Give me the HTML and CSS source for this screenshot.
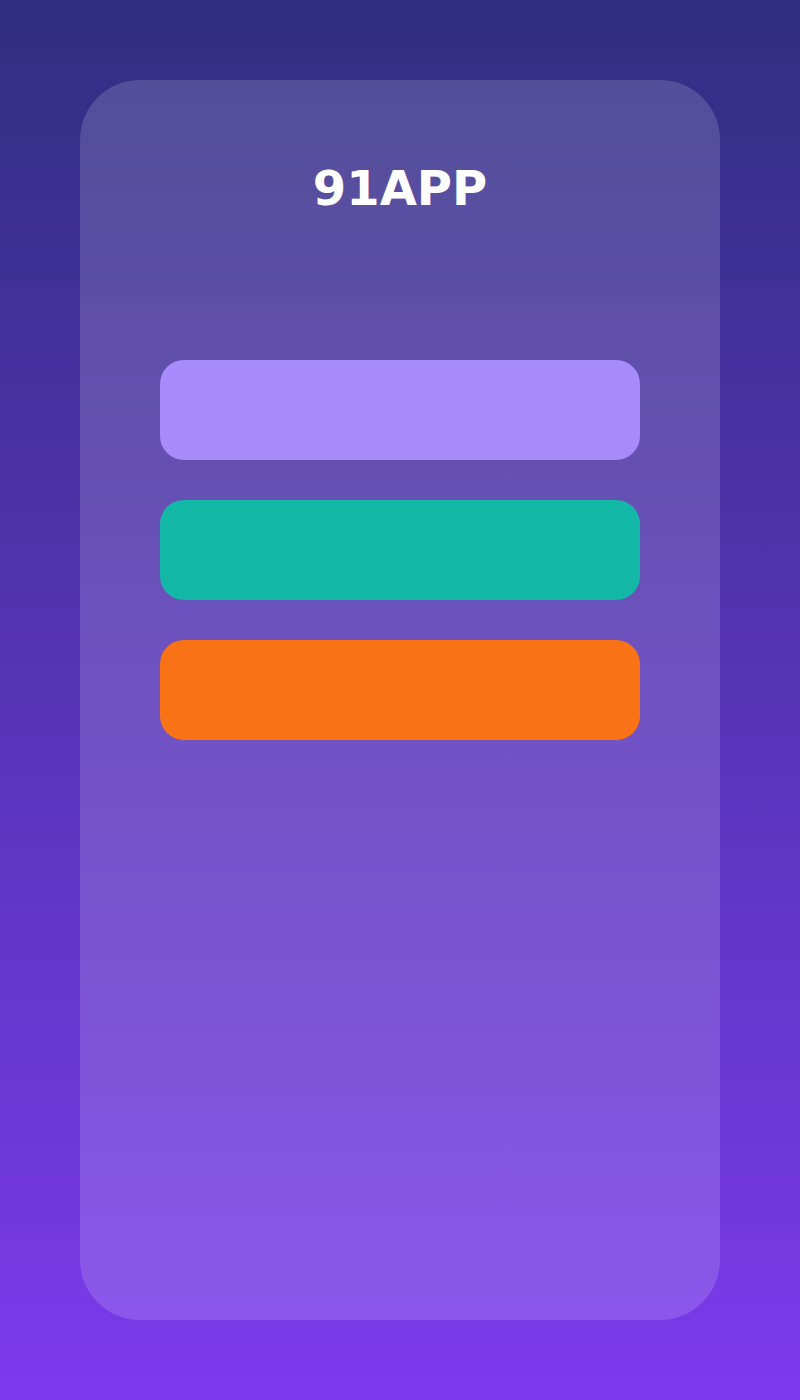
FILE: index.html
```html
<!DOCTYPE html>
<html>
<head>
<meta charset="utf-8">
<link rel="stylesheet" href="styles.css">
</head>
<body>
<div class="page">
  <div class="card">
    <h1 class="title">91APP</h1>
    <div class="buttons">
      <div class="btn btn-purple"></div>
      <div class="btn btn-teal"></div>
      <div class="btn btn-orange"></div>
    </div>
  </div>
</div>
</body>
</html>
```
FILE: styles.css
```css
html, body {
  margin: 0;
  padding: 0;
}
body {
  width: 800px;
  height: 1400px;
  background: linear-gradient(180deg, #312e81 0%, #7c3aed 100%);
  font-family: "DejaVu Sans", sans-serif;
}
.page {
  padding: 80px;
  box-sizing: border-box;
  height: 1400px;
}
.card {
  height: 1240px;
  background: rgba(255, 255, 255, 0.15);
  border-radius: 60px;
  padding: 80px 80px;
  box-sizing: border-box;
}
.title {
  margin: 0;
  text-align: center;
  color: #ffffff;
  font-size: 48px;
  font-weight: bold;
  line-height: 56px;
}
.buttons {
  margin-top: 144px;
  display: flex;
  flex-direction: column;
  gap: 40px;
}
.btn {
  height: 100px;
  border-radius: 24px;
}
.btn-purple { background: #a78bfa; }
.btn-teal { background: #14b8a6; }
.btn-orange { background: #f97316; }
```
